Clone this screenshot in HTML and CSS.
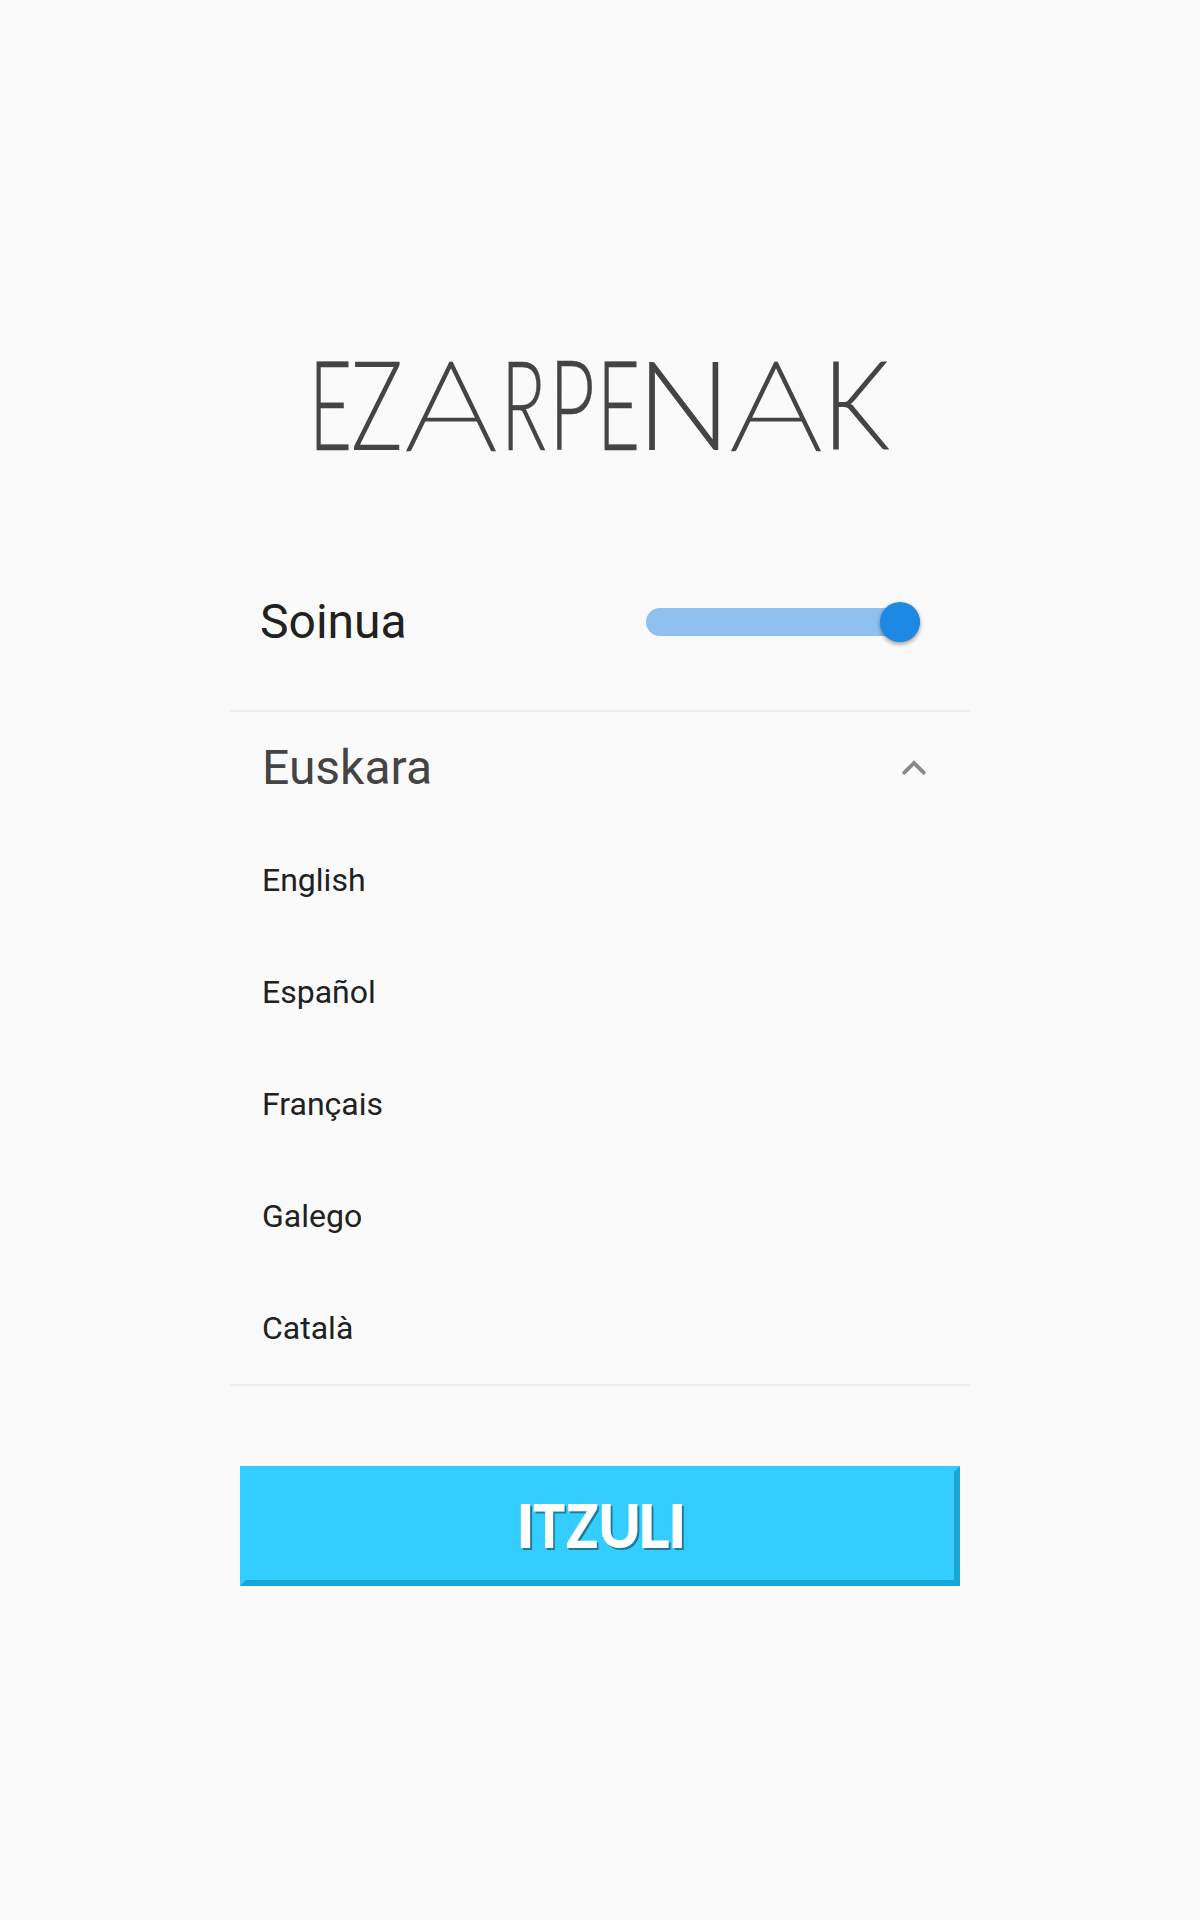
FILE: index.html
```html
<!DOCTYPE html>
<html lang="eu">
<head>
<meta charset="utf-8">
<title>Ezarpenak</title>
<link rel="stylesheet" href="styles.css">
</head>
<body>
<main class="settings">
<h1 class="title"><span class="e">E</span><span class="z">Z</span><span class="a">A</span><span class="r">R</span><span class="p">P</span><span class="e2">E</span><span class="n">N</span><span class="a2">A</span><span class="k">K</span></h1>
<section class="sound">
<span class="label">Soinua</span>
<div class="switch"><div class="thumb"></div></div>
</section>
<section class="languages">
<div class="current"><span>Euskara</span>
<svg class="chevron" width="24" height="16" viewBox="0 0 24 16"><path d="M2.3 12.7 12 3l9.700 9.700" fill="none" stroke="#888" stroke-width="3.800" stroke-linecap="round"/></svg></div>
<ul class="list"><li>English</li><li>Español</li><li>Français</li><li>Galego</li><li>Català</li></ul>
</section>
<button class="back"><span class="bi">I</span><span class="bt">T</span><span class="bz">Z</span><span class="bu">U</span><span class="bl">L</span><span class="bi2">I</span></button>
</main>
</body>
</html>
```
FILE: styles.css
```css
* { box-sizing: border-box; }
body { margin: 0; background: #fafafa; color: #212121; font-family: Roboto, sans-serif; }
.settings { width: 740px; margin: 0 auto; padding-top: 327px; }

/* Condensed and widened capitals: each letter has its own cell and stretch */
.title { display: flex; margin: 0; height: 183px; padding-left: 78.6px; font: 300 124px/150px Lato, sans-serif; color: #444; }
.title span, .back span { transform: scaleX(var(--s)); transform-origin: left; }
.e, .e2, .r, .p { -webkit-text-stroke: 0.4px #444; }
.e { width: 42.8px; --s: 0.6; }
.z { width: 53.2px; --s: 0.7; }
.a { width: 96.7px; --s: 1.165; }
.a, .a2 { font-weight: 100; -webkit-text-stroke: 2.4px #444; }
.r { width: 47.7px; --s: 0.6; }
.p { width: 47.6px; --s: 0.641; }
.e2 { width: 39.3px; --s: 0.6; }
.n { width: 93.7px; --s: 1.02; }
.a2 { width: 92.6px; --s: 1.165; }
.k { width: 60px; --s: 0.867; }

.sound { height: 202px; border-bottom: 2px solid #eee; padding: 80px 50px 0 30px; display: flex; justify-content: space-between; align-items: flex-start; font-size: 48px; line-height: 64px; }
.switch { width: 274px; height: 28px; margin-top: 18px; border-radius: 14px; background: #8ec1f0; display: flex; justify-content: flex-end; align-items: center; }
.thumb { width: 40px; height: 40px; flex: none; border-radius: 50%; background: #1e88e5; box-shadow: 0 2px 4px rgba(0,0,0,.4); }

.languages { height: 674px; border-bottom: 2px solid #eee; }
.current { height: 112px; padding: 0 44px 0 32px; display: flex; align-items: center; justify-content: space-between; font-size: 48px; color: #444; }
.current span { padding-bottom: 2px; }
.list { margin: 0; padding: 0 0 0 32px; list-style: none; font-size: 32px; line-height: 112px; }

.back { display: flex; justify-content: center; align-items: center; width: 720px; height: 120px; margin: 80px auto 0; padding: 0 0 4px; border: 6px solid; border-color: #33ceff #18a6d6 #18a6d6 #33ceff; background: #33ceff; color: #fff; font: 900 61px Lato, sans-serif; text-shadow: 2px 2px 0 rgba(0,0,0,.4); }
.back span { text-align: left; }
.bi { width: 16.3px; --s: 1; }
.bt { width: 33.5px; --s: 0.875; }
.bz { width: 31.5px; --s: 0.88; }
.bu { width: 40.2px; --s: 0.95; }
.bl { width: 30.3px; --s: 1; }
.bi2 { width: 15.8px; --s: 1; }
```
